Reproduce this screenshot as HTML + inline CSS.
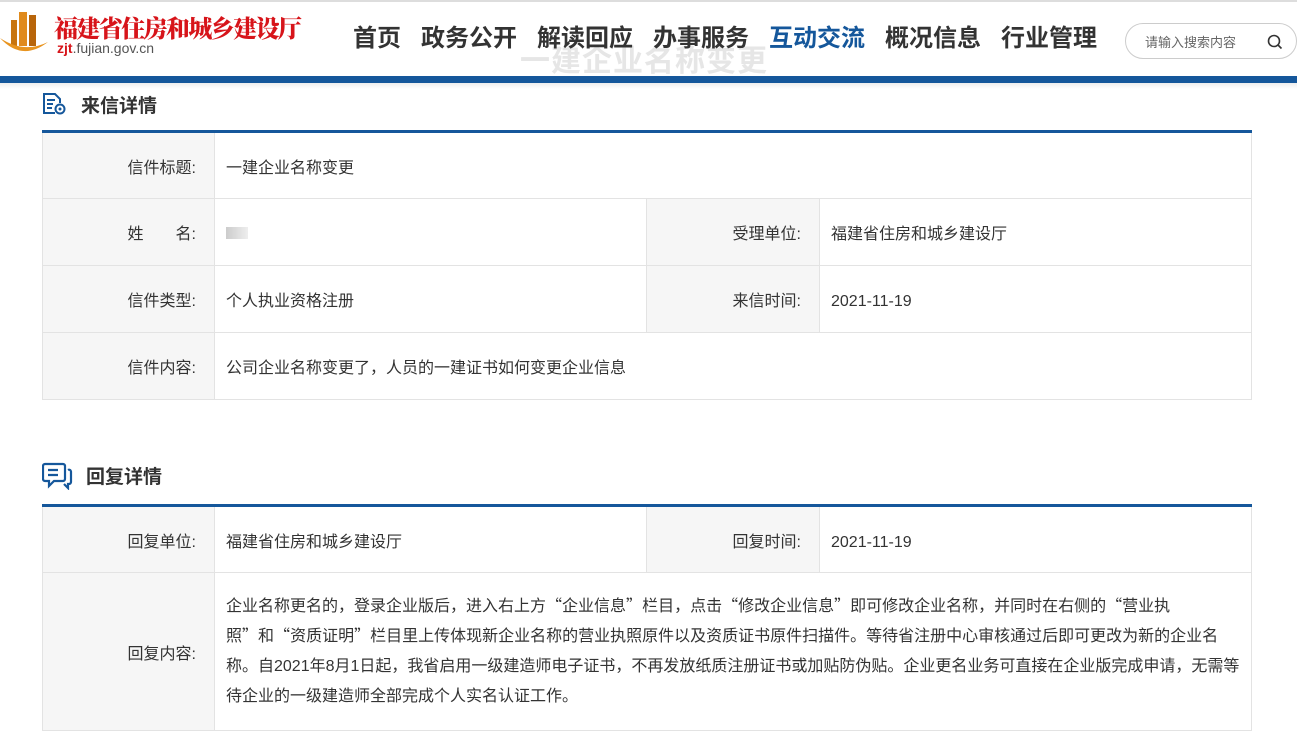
<!DOCTYPE html>
<html><head><meta charset="utf-8"><style>
*{margin:0;padding:0;box-sizing:border-box}
body{width:1297px;height:734px;overflow:hidden;background:#fff;font-family:"Liberation Sans","Noto Sans CJK SC",sans-serif;position:relative;color:#333}
.hdr{position:absolute;left:0;top:0;width:1297px;height:76px;border-top:2px solid #ddd}
.bar{position:absolute;left:0;top:76px;width:1297px;height:7px;background:#15579b}
.shadow{position:absolute;left:0;top:83px;width:1297px;height:6px;background:linear-gradient(#eee,#fff)}
.ghost{position:absolute;left:520px;top:36px;font-size:30px;font-weight:bold;color:#e6e6e6;letter-spacing:1px}
.logo-t{position:absolute;left:54px;top:7px;font-family:"Noto Serif CJK SC",serif;font-weight:900;font-size:24px;color:#d7141a;letter-spacing:-1.6px}
.logo-u{position:absolute;left:57px;top:38px;font-size:14px;color:#555}
.logo-u b{color:#d7141a;font-weight:bold}
.nav{position:absolute;left:353px;top:16px;font-size:24px;font-weight:bold;color:#333;white-space:nowrap}
.nav span{margin-right:20px}
.search{position:absolute;left:1125px;top:21px;width:172px;height:36px;border:1px solid #ccc;border-radius:18px;font-size:13px;color:#666;padding:8px 0 0 19px}
.sec{position:absolute;left:81px;font-size:19px;font-weight:bold;color:#333}
table{position:absolute;left:42px;width:1210px;border-collapse:collapse;border-top:3px solid #15579b;font-size:16px}
td{border:1px solid #e3e3e3;padding:6px 11px 0;line-height:24px}
td.l{background:#f6f6f6;text-align:right;width:172px;padding-right:18px}
.q{font-family:"Noto Sans CJK SC",sans-serif;line-height:20px}
</style></head><body>
<div class="ghost">一建企业名称变更</div>
<div class="hdr">
<svg style="position:absolute;left:0;top:8px" width="50" height="48" viewBox="0 0 50 48">
<rect x="11" y="10" width="6" height="26" fill="#c8750f"/>
<rect x="19" y="2" width="8" height="34" fill="#e08a1c"/>
<rect x="29" y="5" width="7" height="31" fill="#b8650a"/>
<path d="M0 28 Q22 52 48 32 Q24 44 0 28Z" fill="#e8941f"/>
</svg>
<div class="logo-t">福建省住房和城乡建设厅</div>
<div class="logo-u"><b>zjt</b>.fujian.gov.cn</div>
<div class="nav"><span>首页</span><span>政务公开</span><span>解读回应</span><span>办事服务</span><span style="color:#15579b">互动交流</span><span>概况信息</span><span>行业管理</span></div>
<div class="search">请输入搜索内容
<svg style="position:absolute;right:13px;top:10px" width="16" height="16" viewBox="0 0 16 16"><circle cx="7" cy="7" r="5.5" fill="none" stroke="#333" stroke-width="1.6"/><path d="M11 11l3.5 3.5" stroke="#333" stroke-width="1.6"/></svg></div>
</div>
<div class="bar"></div><div class="shadow"></div>

<svg style="position:absolute;left:42px;top:92px" width="26" height="24" viewBox="0 0 26 24"><path d="M13 21H2V2h11l5 5v4" fill="none" stroke="#15579b" stroke-width="2"/><path d="M5 8h8M5 12h6M5 16h5" stroke="#15579b" stroke-width="2"/><circle cx="18" cy="17" r="4.5" fill="none" stroke="#15579b" stroke-width="2"/><circle cx="18" cy="17" r="1.5" fill="#15579b"/></svg>
<div class="sec" style="top:91px">来信详情</div>
<table style="top:130px">
<tr style="height:67px"><td class="l">信件标题:</td><td colspan="3">一建企业名称变更</td></tr>
<tr style="height:67px"><td class="l">姓　　名:</td><td style="width:432px"><span style="display:inline-block;width:22px;height:12px;background:linear-gradient(90deg,#ccc,#eee)"></span></td><td class="l" style="width:173px">受理单位:</td><td>福建省住房和城乡建设厅</td></tr>
<tr style="height:67px"><td class="l">信件类型:</td><td>个人执业资格注册</td><td class="l">来信时间:</td><td>2021-11-19</td></tr>
<tr style="height:67px"><td class="l">信件内容:</td><td colspan="3">公司企业名称变更了，人员的一建证书如何变更企业信息</td></tr>
</table>

<svg style="position:absolute;left:42px;top:462px" width="32" height="28" viewBox="0 0 32 28"><path d="M3 2h18a2 2 0 0 1 2 2v13a2 2 0 0 1-2 2H12l-5 5v-5H3a2 2 0 0 1-2-2V4a2 2 0 0 1 2-2z" fill="none" stroke="#15579b" stroke-width="2.2"/><path d="M6 8h10M6 13h10" stroke="#15579b" stroke-width="2.2"/><path d="M26 8a2 2 0 0 1 3 2v10a2 2 0 0 1-2 2h-1v4l-4-4" fill="none" stroke="#15579b" stroke-width="2.2"/></svg>
<div class="sec" style="top:462px;left:86px">回复详情</div>
<table style="top:504px">
<tr style="height:67px"><td class="l">回复单位:</td><td style="width:432px">福建省住房和城乡建设厅</td><td class="l" style="width:173px">回复时间:</td><td>2021-11-19</td></tr>
<tr style="height:158px"><td class="l">回复内容:</td><td colspan="3" style="line-height:30px;padding:0 4px 0 11px;white-space:nowrap">企业名称更名的，登录企业版后，进入右上方<span class="q">“</span>企业信息<span class="q">”</span>栏目，点击<span class="q">“</span>修改企业信息<span class="q">”</span>即可修改企业名称，并同时在右侧的<span class="q">“</span>营业执<br>照<span class="q">”</span>和<span class="q">“</span>资质证明<span class="q">”</span>栏目里上传体现新企业名称的营业执照原件以及资质证书原件扫描件。等待省注册中心审核通过后即可更改为新的企业名<br>称。自2021年8月1日起，我省启用一级建造师电子证书，不再发放纸质注册证书或加贴防伪贴。企业更名业务可直接在企业版完成申请，无需等<br>待企业的一级建造师全部完成个人实名认证工作。</td></tr>
</table>
</body></html>
